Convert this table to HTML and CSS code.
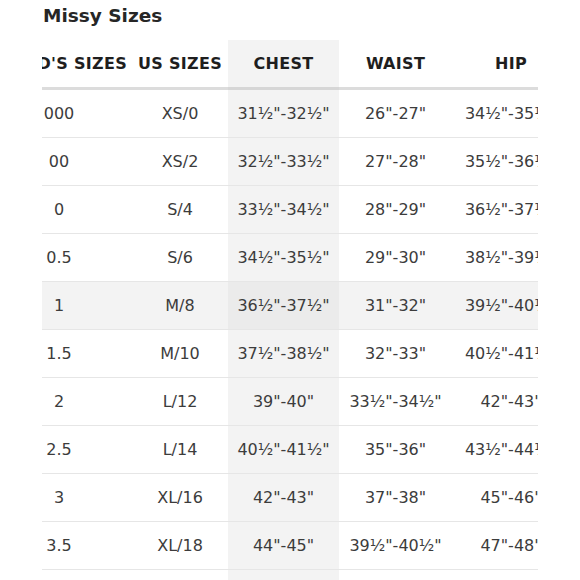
FILE: index.html
```html
<!DOCTYPE html>
<html>
<head>
<meta charset="utf-8">
<link rel="stylesheet" href="styles.css">
</head>
<body>
<div class="page">
  <h1 class="title">Missy Sizes</h1>
  <div class="scroller">
    <table class="sizes">
      <colgroup>
        <col class="c-brand"><col class="c-us"><col class="c-chest"><col class="c-waist"><col class="c-hip"><col class="c-more">
      </colgroup>
      <thead>
        <tr><th class="brand">BRAND'S SIZES</th><th>US SIZES</th><th class="chest">CHEST</th><th>WAIST</th><th>HIP</th><th></th></tr>
      </thead>
      <tbody>
        <tr><td>000</td><td>XS/0</td><td class="chest">31½"-32½"</td><td>26"-27"</td><td>34½"-35½"</td><td></td></tr>
        <tr><td>00</td><td>XS/2</td><td class="chest">32½"-33½"</td><td>27"-28"</td><td>35½"-36½"</td><td></td></tr>
        <tr><td>0</td><td>S/4</td><td class="chest">33½"-34½"</td><td>28"-29"</td><td>36½"-37½"</td><td></td></tr>
        <tr><td>0.5</td><td>S/6</td><td class="chest">34½"-35½"</td><td>29"-30"</td><td>38½"-39½"</td><td></td></tr>
        <tr class="hl"><td>1</td><td>M/8</td><td class="chest">36½"-37½"</td><td>31"-32"</td><td>39½"-40½"</td><td></td></tr>
        <tr><td>1.5</td><td>M/10</td><td class="chest">37½"-38½"</td><td>32"-33"</td><td>40½"-41½"</td><td></td></tr>
        <tr><td>2</td><td>L/12</td><td class="chest">39"-40"</td><td>33½"-34½"</td><td>42"-43"</td><td></td></tr>
        <tr><td>2.5</td><td>L/14</td><td class="chest">40½"-41½"</td><td>35"-36"</td><td>43½"-44½"</td><td></td></tr>
        <tr><td>3</td><td>XL/16</td><td class="chest">42"-43"</td><td>37"-38"</td><td>45"-46"</td><td></td></tr>
        <tr><td>3.5</td><td>XL/18</td><td class="chest">44"-45"</td><td>39½"-40½"</td><td>47"-48"</td><td></td></tr>
        <tr><td>4</td><td>XXL/20</td><td class="chest">46"-47"</td><td>41½"-42½"</td><td>49"-50"</td><td></td></tr>
      </tbody>
    </table>
  </div>
</div>
</body>
</html>
```

FILE: styles.css
```css
html, body {
  margin: 0;
  padding: 0;
  background: #ffffff;
}

body {
  font-family: "DejaVu Sans", "Liberation Sans", sans-serif;
  color: #3a3a3a;
}

.page {
  padding: 0 42px;
}

.title {
  margin: 0;
  padding: 4px 0 0 1px;
  height: 40px;
  box-sizing: border-box;
  font-size: 18.5px;
  font-weight: 600;
  color: #262626;
  line-height: 24px;
}

.scroller {
  width: 496px;
  overflow: hidden;
}

.sizes {
  margin-left: -56px;
  border-collapse: collapse;
  table-layout: fixed;
  width: 664px;
}

.c-brand { width: 146px; }
.c-us { width: 96px; }
.c-chest { width: 111px; }
.c-waist { width: 113px; }
.c-hip { width: 118px; }
.c-more { width: 80px; }

.sizes th,
.sizes td {
  padding: 0;
  text-align: center;
  white-space: nowrap;
  overflow: hidden;
}

.sizes th {
  height: 47px;
  font-size: 16px;
  font-weight: 700;
  letter-spacing: 0.3px;
  color: #1e1e1e;
  border-bottom: 3px solid #dcdcdc;
}

.sizes th.brand {
  padding-right: 6px;
}

.sizes td {
  height: 47px;
  font-size: 16px;
  color: #3c3c3c;
  border-bottom: 1px solid #e6e6e6;
}

.sizes .chest {
  background: #f3f3f3;
}

.sizes th.chest {
  border-bottom-color: #d6d6d6;
}

.sizes tr.hl td {
  background: #f3f3f3;
}

.sizes tr.hl td.chest {
  background: #ebebeb;
}
```
